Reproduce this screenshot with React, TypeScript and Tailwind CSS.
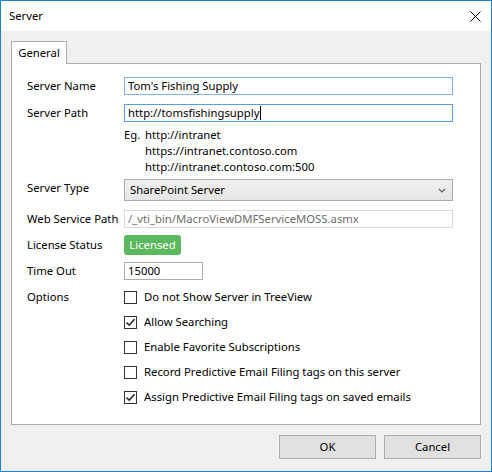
import { ReactNode } from 'react'

const font = { fontFamily: '"Noto Sans", "Segoe UI", sans-serif' }

type Option = { label: string; checked: boolean }

const options: Option[] = [
  { label: 'Do not Show Server in TreeView', checked: false },
  { label: 'Allow Searching', checked: true },
  { label: 'Enable Favorite Subscriptions', checked: false },
  { label: 'Record Predictive Email Filing tags on this server', checked: false },
  { label: 'Assign Predictive Email Filing tags on saved emails', checked: true },
]

function Row({
  label,
  children,
  className = '',
  labelClass = '',
}: {
  label: string
  children: ReactNode
  className?: string
  labelClass?: string
}) {
  return (
    <div className={`flex items-center ${className}`}>
      <div className={`w-[97px] shrink-0 whitespace-nowrap ${labelClass}`}>{label}</div>
      <div className="flex-1">{children}</div>
    </div>
  )
}

function CheckBox({ checked }: { checked: boolean }) {
  return (
    <span className="flex h-[13px] w-[13px] shrink-0 items-center justify-center border border-[#333333] bg-white">
      {checked && (
        <svg width="11" height="11" viewBox="0 0 11 11">
          <path d="M1.5 5.5 L4.2 8.2 L9.5 2.2" fill="none" stroke="#222" strokeWidth="1.6" />
        </svg>
      )}
    </span>
  )
}

export default function App() {
  return (
    <div
      className="flex h-[472px] w-[492px] flex-col border border-[#1883d7] bg-[#f0f0f0] text-[11.3px] text-black"
      style={font}
    >
      <div className="flex h-[30px] items-center justify-between bg-white pl-[8px] pr-[10px]">
        <span>Server</span>
        <svg width="11" height="11" viewBox="0 0 11 11">
          <path d="M0.5 0.5 L10.5 10.5 M10.5 0.5 L0.5 10.5" stroke="#000" strokeWidth="1" />
        </svg>
      </div>

      <div className="flex flex-1 flex-col px-[10px] pt-[10px]">
        <div className="flex">
          <div className="relative z-10 -mb-px flex h-[23px] w-[56px] items-center justify-center border border-b-0 border-[#acacac] bg-white">
            General
          </div>
        </div>
        <div className="flex h-[362px] flex-col border border-[#acacac] bg-white pl-[15px] pr-[27px] pt-[13px]">
          <Row label="Server Name">
            <div className="flex h-[18px] items-center border border-[#7eb4ea] px-[3px]">Tom's Fishing Supply</div>
          </Row>
          <Row label="Server Path" className="mt-[9px]">
            <div className="flex h-[18px] items-center border border-[#569de5] px-[3px]">
              http://tomsfishingsupply<span className="ml-px h-[14px] w-px bg-black" />
            </div>
          </Row>
          <div className="ml-[97px] mt-[5px] flex leading-[16px]">
            <span className="w-[21px]">Eg.</span>
            <div className="flex flex-col">
              <span>http://intranet</span>
              <span>https://intranet.contoso.com</span>
              <span>http://intranet.contoso.com:500</span>
            </div>
          </div>
          <Row label="Server Type" className="mt-[4px]" labelClass="pb-[4px]">
            <div className="flex h-[22px] items-center justify-between border border-[#acacac] bg-gradient-to-b from-[#f0f0f0] to-[#e5e5e5] pl-[5px] pr-[6px]">
              <span>SharePoint Server</span>
              <svg width="8" height="5" viewBox="0 0 8 5">
                <path d="M1 1 L4 4 L7 1" fill="none" stroke="#606060" strokeWidth="1.2" />
              </svg>
            </div>
          </Row>
          <Row label="Web Service Path" className="mt-[9px]">
            <div className="flex h-[18px] items-center border border-[#d9d9d9] px-[3px] text-[#6d6d6d]">
              /_vti_bin/MacroViewDMFServiceMOSS.asmx
            </div>
          </Row>
          <Row label="License Status" className="mt-[7px]">
            <span className="inline-flex h-[20px] w-[57px] items-center justify-center rounded-[3px] bg-[#5cb85c] text-white">
              Licensed
            </span>
          </Row>
          <Row label="Time Out" className="mt-[7px]">
            <div className="flex h-[18px] w-[79px] items-center border border-[#acacac] px-[3px]">15000</div>
          </Row>
          <div className="mt-[7px] flex">
            <div className="w-[97px] shrink-0 leading-[20px]">Options</div>
            <div className="flex flex-col">
              {options.map((o) => (
                <div key={o.label} className="flex h-[25px] items-center gap-[7px] pb-[5px]">
                  <CheckBox checked={o.checked} />
                  <span>{o.label}</span>
                </div>
              ))}
            </div>
          </div>
        </div>
        <div className="mt-[10px] flex justify-end gap-[8px]">
          <button className="h-[24px] w-[97px] border border-[#adadad] bg-[#e1e1e1]">OK</button>
          <button className="h-[24px] w-[97px] border border-[#adadad] bg-[#e1e1e1]">Cancel</button>
        </div>
      </div>
    </div>
  )
}
